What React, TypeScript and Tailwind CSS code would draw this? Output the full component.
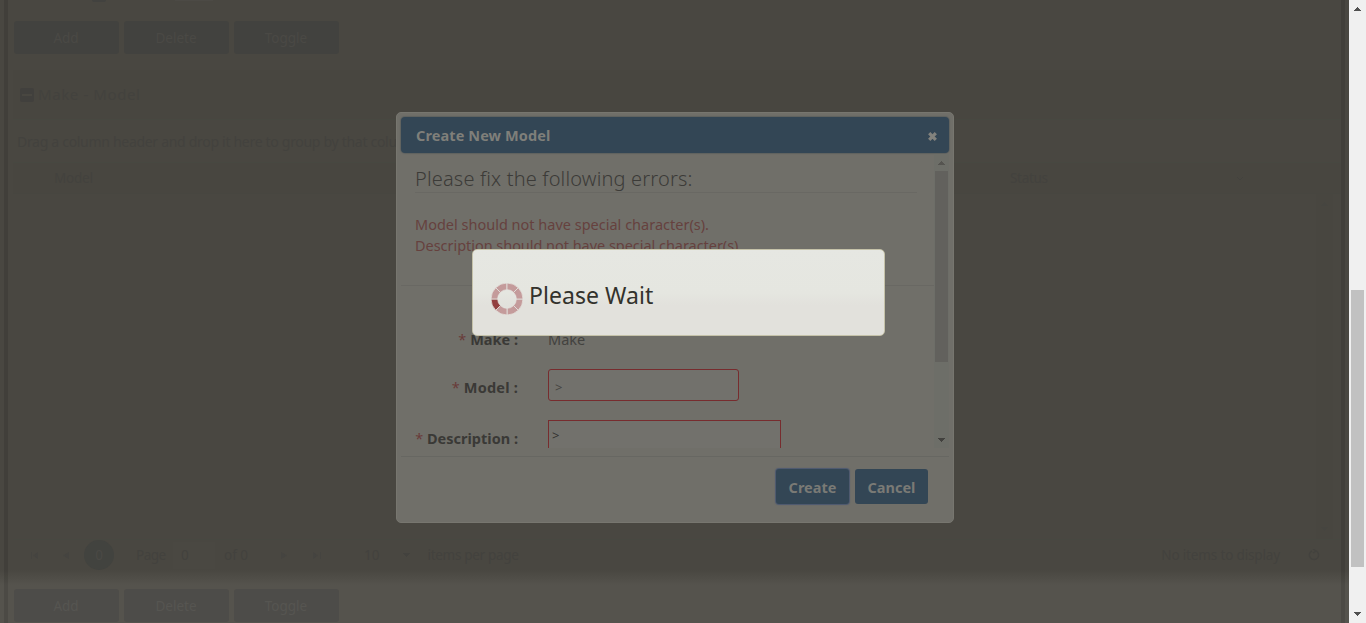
import React from "react";

const GridButtons = ({ tone }: { tone: string }) => (
  <div className="flex h-[33px] gap-[5px] pl-[13.5px]">
    {["Add", "Delete", "Toggle"].map((label) => (
      <div
        key={label}
        className={`flex h-[33px] w-[105px] items-center justify-center rounded-[3px] pt-0.5 text-[13.5px] ${tone}`}
      >
        {label}
      </div>
    ))}
  </div>
);

const Arrow = ({ up = false, className = "" }: { up?: boolean; className?: string }) => (
  <svg width="7" height="4" viewBox="0 0 7 4" shapeRendering="crispEdges" className={className}>
    <path d={up ? "M3 0h1v1h1v1h1v1h1v1H0V3h1V2h1V1h1z" : "M0 0h7v1H6v1H5v1H4v1H3V3H2V2H1V1H0z"} fill="currentColor" />
  </svg>
);

const Spinner = () => {
  const segments = Array.from({ length: 8 }, (_, i) => {
    const a = (i * Math.PI) / 4;
    const b = ((i + 1) * Math.PI) / 4;
    const p = (r: number, t: number) => `${16 + r * Math.cos(t)} ${16 + r * Math.sin(t)}`;
    return `M${p(16, a)}A16 16 0 0 1 ${p(16, b)}L${p(9.3, b)}A9.3 9.3 0 0 0 ${p(9.3, a)}Z`;
  });
  return (
    <svg width="32" height="32" viewBox="0 0 32 32">
      {segments.map((d, i) => (
        <path key={i} d={d} fill={i === 3 ? "#923f3f" : "#c49b9b"} stroke="#e5e5e0" strokeWidth="0.8" />
      ))}
    </svg>
  );
};

const Label = ({ children, className = "" }: { children: string; className?: string }) => (
  <div className={`w-[117px] text-right text-[14.5px] leading-[20px] font-bold whitespace-nowrap text-[#3a3936] ${className}`}>
    <span className="font-normal text-[#693b39]">*</span> {children} :
  </div>
);

const Page = () => (
  <div className="flex h-full w-[1349px] flex-col bg-[linear-gradient(#494741_0_570px,#55534d_585px)]">
    <div className="flex h-full justify-between">
      <div className="ml-1 h-full w-1 shrink-0 bg-black/10" />
      <div className="-ml-2 flex h-full w-[1341px] shrink-0 flex-col pl-2 text-[#43423e]">
        <div className="-ml-2 flex h-[21px] items-start">
          <div className="ml-[92px] h-[2px] w-[14px] rounded-b-full bg-[#42423f]" />
          <div className="ml-[69px] h-px w-[38px] bg-[#4c4a45]" />
        </div>
        <div className="-ml-2">
          <GridButtons tone="bg-[#42423f] text-[#4a4945]" />
        </div>
        <div className="ml-[5px] mt-[16px] flex h-[49px] items-center gap-[5px] bg-[#484640] pl-[7px] text-[15px]">
          <svg width="14" height="14" viewBox="0 0 14 14">
            <rect width="14" height="14" rx="2" fill="#41403d" />
            <rect x="2" y="6" width="10" height="2" fill="#494741" />
          </svg>
          <span className="-ml-px tracking-[0.6px]">Make - Model</span>
        </div>
        <div className="ml-[5px] flex h-[44px] items-center border-y border-[#474841] pl-1 text-[14px] tracking-[-0.3px]">
          Drag a column header and drop it here to group by that column
        </div>
        <div className="ml-[5px] flex h-[31px] items-center border-b border-[#474640] bg-[#484640] pl-[41px] text-[13.5px]">
          <span className="w-[932px] tracking-[-0.2px]">Model</span>
          <span className="ml-[24px] w-[226px] tracking-[-0.3px]">Status</span>
          <svg width="8" height="5" viewBox="0 0 8 5"><path d="M1 1l3 3 3-3" fill="none" stroke="#43423e" /></svg>
        </div>
        <div className="ml-[5px] flex h-[346px] justify-end border-b border-[#474841]">
          <div className="mr-[8px] flex w-[17px] flex-col items-center justify-between bg-[#484640] py-2 text-[#464540]">
            <Arrow up />
            <Arrow />
          </div>
        </div>
        <div className="ml-[5px] flex h-[32px] items-center pb-0.5 text-[13.5px] text-[#43423e]">
          <svg className="ml-[18px] text-[#454440]" width="8" height="7" viewBox="0 0 8 7"><path d="M0 0h1v7H0zM7 0v7L2 3.5z" fill="currentColor" /></svg>
          <svg className="ml-[24px] text-[#454440]" width="6" height="7" viewBox="0 0 6 7"><path d="M6 0v7L0 3.5z" fill="currentColor" /></svg>
          <div className="ml-[15px] flex h-[30px] w-[30px] shrink-0 items-center justify-center rounded-full bg-[#42433f] text-[#4a4945]">0</div>
          <span className="ml-[22px] w-[30px] tracking-[-0.5px]">Page</span>
          <span className="ml-[7px] flex h-[27px] w-[42px] items-center bg-[#4a4842] pl-2">0</span>
          <span className="ml-[9px]">of 0</span>
          <svg className="ml-[33px] text-[#454440]" width="6" height="7" viewBox="0 0 6 7"><path d="M0 0v7l6-3.5z" fill="currentColor" /></svg>
          <svg className="ml-[26px] text-[#454440]" width="8" height="7" viewBox="0 0 8 7"><path d="M7 0h1v7H7zM0 0v7l5-3.5z" fill="currentColor" /></svg>
          <span className="ml-[43px]">10</span>
          <Arrow className="ml-[23px]" />
          <span className="ml-[18px] tracking-[-0.3px]">items per page</span>
          <span className="mr-[28px] ml-auto tracking-[-0.15px]">No items to display</span>
          <svg className="mr-[21px]" width="12" height="12" viewBox="0 0 12 12"><path d="M4 1.8A4.6 4.6 0 1 0 8 1.8M5 0l3 2-3 2" fill="none" stroke="currentColor" strokeWidth="1.4" /></svg>
        </div>
        <div className="-ml-2 mt-[17px]">
          <GridButtons tone="bg-[#4d4c49] text-[#565551]" />
        </div>
      </div>
      <div className="mr-1 h-full w-1 shrink-0 bg-black/10" />
    </div>
  </div>
);

const Dialog = () => (
  <div className="absolute top-[112px] left-[396px] flex h-[411px] w-[558px] flex-col rounded-[5px] border border-[#77766f] bg-[#706f69] p-1">
    <div className="flex h-[36px] shrink-0 items-center justify-between rounded-[4px] bg-[#334655] pr-[11px] pl-[15px] shadow-[0_0_1px_1px_#5f6260]">
      <span className="pt-0.5 text-[14.5px] font-bold tracking-[0.1px] text-[#7f7f7a]">Create New Model</span>
      <svg className="mt-[3px]" width="11" height="11" viewBox="0 0 11 11">
        <path d="M2.2 2.2l6.6 6.6M8.8 2.2L2.2 8.8" stroke="#82827d" strokeWidth="3.2" />
      </svg>
    </div>
    <div className="mt-px flex h-[294px] shrink-0 overflow-hidden">
      <div className="flex w-[533px] flex-col">
        <div className="mr-[17px] ml-[14px] h-[39px] border-b border-[#696863] pt-[10px] text-[20px] leading-[30px] font-light tracking-[0.16px] whitespace-nowrap text-[#3c3b38]">
          Please fix the following errors:
        </div>
        <div className="mt-[21px] ml-[14px] text-[14.5px] leading-[21px] text-[#66413e]">
          <div>Model should not have special character(s).</div>
          <div className="tracking-[-0.04px]">Description should not have special character(s).</div>
        </div>
        <div className="mt-[29px] h-px shrink-0 bg-[#696863]" />
        <div className="mt-[43px] flex h-[20px] shrink-0 items-center">
          <Label>Make</Label>
          <span className="mt-0.5 ml-[30px] text-[14.5px] text-[#43423f]">Make</span>
        </div>
        <div className="mt-[20px] flex h-[32px] shrink-0 items-center">
          <div className="pt-1"><Label className="tracking-[0.2px]">Model</Label></div>
          <div className="ml-[30px] flex h-[32px] w-[191px] items-center rounded-[3px] border border-[#772c2e] bg-[#72716c] pt-[5px] pl-[6px] text-[13px] text-[#464542]">&gt;</div>
        </div>
        <div className="mt-[19px] flex h-[60px] shrink-0">
          <div className="pt-[8px]"><Label>Description</Label></div>
          <div className="ml-[30px] h-[60px] w-[233px] border border-[#772c2e] bg-[#72716c] pt-[4px] pl-[3px] text-[13px] leading-[20px] text-[#333230]">&gt;</div>
        </div>
      </div>
      <div className="flex w-[15px] flex-col items-center bg-[#6d6e68]">
        <Arrow up className="mt-[7px] shrink-0 text-[#555450]" />
        <div className="mt-[6px] h-[191px] w-[13px] shrink-0 bg-[#62615d]" />
        <Arrow className="mt-auto mb-[6px] shrink-0 text-[#42413e]" />
      </div>
    </div>
    <div className="mt-[8px] flex h-[60px] justify-end gap-[6px] border-t border-[#676762] pt-[12px] pr-[21px] text-[14.5px] font-bold text-[#7a7a75]">
      <div className="flex h-[35px] w-[73px] items-center justify-center rounded-[3px] bg-[#334655] pt-0.5 shadow-[0_0_1px_1px_#4c5870]">Create</div>
      <div className="flex h-[35px] w-[73px] items-center justify-center rounded-[3px] bg-[#334655] pt-0.5">Cancel</div>
    </div>
  </div>
);

export default function App() {
  return (
    <div className="relative flex h-[623px] w-[1366px] overflow-hidden bg-[#494741] font-['Noto_Sans','Open_Sans',sans-serif]">
      <Page />
      <div className="flex w-[17px] shrink-0 flex-col items-center bg-[#f0f0f0] text-[#505050]">
        <Arrow up className="mt-[7px] shrink-0" />
        <div className="mt-[279px] h-[277px] w-[13px] shrink-0 bg-[#c1c1c1]" />
        <Arrow className="mt-auto mb-[7px] shrink-0" />
      </div>
      <Dialog />
      <div className="absolute top-[249px] left-[472px] flex h-[87px] w-[413px] items-center rounded-[5px] border border-[#c5c2a9] bg-[linear-gradient(#e6e7e2_0%,#e5e6e0_50%,#e2e1dc_65%,#e2e1dc_100%)] pl-[18px] text-[23px] text-[#33322c]">
        <div className="mt-[12px]"><Spinner /></div>
        <span className="mt-[6px] ml-[6px] tracking-[0.05px]">Please Wait</span>
      </div>
    </div>
  );
}
